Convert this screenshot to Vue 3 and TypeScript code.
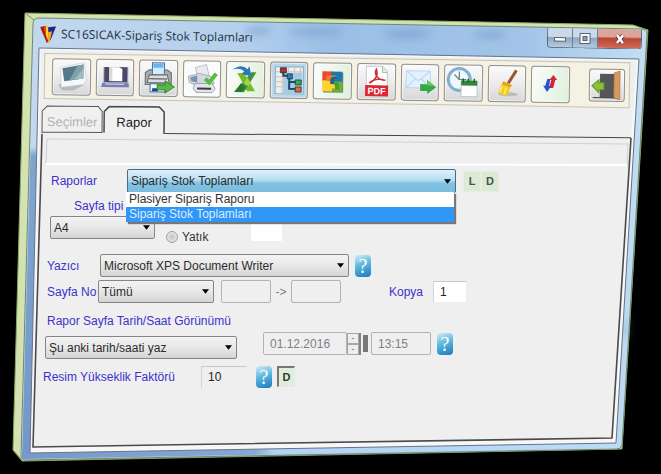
<script setup lang="ts">
import { ref } from 'vue'

const reports = ['Plasiyer Sipariş Raporu', 'Sipariş Stok Toplamları']
const report = ref('Sipariş Stok Toplamları')
const listOpen = ref(true)
const tab = ref('Rapor')
const paper = ref('A4')
const printer = ref('Microsoft XPS Document Writer')
const pages = ref('Tümü')
const stamp = ref('Şu anki tarih/saati yaz')
const copies = ref('1')
const factor = ref('10')
const date = ref('01.12.2016')
const time = ref('13:15')

function choose(name: string) {
  report.value = name
  listOpen.value = false
}
</script>

<template>
  <main class="stage">
    <svg class="chassis" viewBox="0 0 661 474" preserveAspectRatio="none" aria-hidden="true">
      <defs>
        <linearGradient id="glass" x1="0" y1="0" x2="1" y2="0">
          <stop offset="0" stop-color="#c3d8ee" />
          <stop offset=".35" stop-color="#b4d0ed" />
          <stop offset=".5" stop-color="#9bbfe6" />
          <stop offset=".8" stop-color="#a3c4e8" />
          <stop offset="1" stop-color="#c4def2" />
        </linearGradient>
        <linearGradient id="leftGlass" x1="0" y1="0" x2="0" y2="1">
          <stop offset="0" stop-color="#c3d8ee" />
          <stop offset=".28" stop-color="#c3d8ee" />
          <stop offset=".3" stop-color="#7fa5cf" />
          <stop offset="1" stop-color="#7398c8" />
        </linearGradient>
        <linearGradient id="baseGlass" x1="0" y1="0" x2="1" y2="0">
          <stop offset="0" stop-color="#7799cb" />
          <stop offset=".39" stop-color="#87a8d6" />
          <stop offset=".42" stop-color="#b3d1f2" />
          <stop offset="1" stop-color="#bcdcf6" />
        </linearGradient>
        <filter id="haze"><feGaussianBlur stdDeviation="4" /></filter>
      </defs>
      <path d="M25 13L633 25L648 30L622 449L22 461L13 450Z" fill="#d3e2b0" stroke="#8aa860" />
      <path d="M25 13L34 20M13 450L22 460" stroke="#7c9458" />
      <path d="M39 18L641 29Q647 29 647 34L622 445Q621 449 617 449L25 460Q21 460 21 455L33 24Q33 18 39 18Z" fill="url(#glass)" stroke="#6b8a72" />
      <path d="M34 26L39 48L31 453L22 458Z" fill="url(#leftGlass)" />
      <path d="M22 453L616 443L620 448L23 459Z" fill="url(#baseGlass)" />
      <g filter="url(#haze)" fill="#6f97c8" opacity=".55">
        <ellipse cx="258" cy="31" rx="14" ry="4" /><ellipse cx="316" cy="32" rx="28" ry="4" />
        <ellipse cx="408" cy="34" rx="24" ry="5" /><ellipse cx="490" cy="35" rx="17" ry="4" />
        <ellipse cx="626" cy="328" rx="2" ry="12" />
      </g>
      <path d="M39 48L639 59L616 443L30 453Z" fill="#f7f7f8" stroke="#64748a" />
      <path d="M41 50L637 61L631 138L612 438L34 447Z" fill="#efefef" />
      <path d="M42 134L33 447L612 438L631 138" fill="none" stroke="#4b494c" stroke-width="1.6" />
      <path d="M47 139L628 144L627 166M47 139L46 164" fill="none" stroke="#d0d0d0" />
      <path d="M46 164L627 165" fill="none" stroke="#fff" stroke-width="2" />
    </svg>

    <div class="window">
      <header class="titlebar">
        <svg class="logo" viewBox="0 0 16 17" aria-hidden="true">
          <path d="M0 1L5 0L9 15L7 17Z" fill="#a31812" />
          <path d="M3 0H8L9 9L7 14Z" fill="#e8471c" />
          <path d="M6 0H9L10 8L9 16L6 9Z" fill="#ffd932" />
          <path d="M8 1L16 0L11 13L9 16Z" fill="#1b2787" />
          <path d="M8 6L12 5L10 15L8 17Z" fill="#f3a720" />
        </svg>
        <h1>SC16SICAK-Sipariş Stok Toplamları</h1>
        <div class="winbtns">
          <button type="button" aria-label="Simge durumuna küçült"><svg viewBox="0 0 14 12"><rect x="1.500" y="5.500" width="11" height="3.500" fill="#fff" stroke="#59636f" /></svg></button>
          <button type="button" aria-label="Ekranı kapla"><svg viewBox="0 0 14 12"><path d="M2 1H12V11H2Z" fill="#f6f8fa" stroke="#59636f" /><path d="M5 4H9V8H5Z" fill="#8ea2bc" stroke="#59636f" /></svg></button>
          <button type="button" class="close" aria-label="Kapat"><svg viewBox="0 0 14 12"><path d="M4 2L10 10M10 2L4 10" stroke="#643234" stroke-width="4" /><path d="M4 2L10 10M10 2L4 10" stroke="#fff" stroke-width="2.500" /></svg></button>
        </div>
      </header>

      <nav class="toolbar" aria-label="Araçlar">
        <div class="tools">
          <button type="button" class="tool" aria-label="Ekran">
            <svg viewBox="0 0 36 32"><path d="M5 25L9 22L30 23V25L20 30H9Z" fill="#b8bbbd" /><path d="M7 7L31 2L33 20L30 24L8 27Z" fill="#f6f8f9" stroke="#c5cacc" stroke-width=".6" /><path d="M9 8L30 4L30 18L11 21Z" fill="#54798b" /><path d="M16 20L24 5L30 4V18Z" fill="#82a1ad" /><path d="M21 19L30 8V18Z" fill="#a3bac1" /></svg>
          </button>
          <button type="button" class="tool" aria-label="Önizleme">
            <svg viewBox="0 0 36 32"><path d="M6 6H31V20L32 26H4L6 20Z" fill="#aaaecb" /><path d="M7 6H30V21H7Z" fill="#4a4967" /><path d="M12 6H22L25 8V20H12Z" fill="#fff" /><path d="M12 6H15V20H12Z" fill="#d8dbd8" /><path d="M5 22H31L32 26H4Z" fill="#787fae" /><path d="M8 23H27" stroke="#dbe0f1" /></svg>
          </button>
          <button type="button" class="tool" aria-label="Yazdır">
            <svg viewBox="0 0 36 32"><path d="M9 8H27L31 11V23H5V11Z" fill="#a8acb0" stroke="#5f6770" /><path d="M12 1H24V13H12Z" fill="#d5ecff" stroke="#416fa5" /><path d="M13 2H23V6H13Z" fill="#68b4ee" /><path d="M9 13H27L29 21H7Z" fill="#dedddd" stroke="#666" /><path d="M9 17H27" stroke="#444" /><path d="M10 22H25V30H10Z" fill="#f5faff" stroke="#46739b" /><path d="M12 28H18" stroke="#164b8b" stroke-width="3" /><path d="M17 23H25V19L34 25L25 31V28H17Z" fill="#59b941" stroke="#328a2b" /></svg>
          </button>
          <button type="button" class="tool white" aria-label="Yazıcı seç">
            <svg viewBox="0 0 36 32"><path d="M11 5L22 2L25 14L14 18Z" fill="#e8eaed" stroke="#bbc0c8" /><path d="M4 14L15 11L27 14L30 21L16 25L5 20Z" fill="#d5d8e1" stroke="#9298a5" stroke-width=".7" /><path d="M6 15L13 13V20L7 19Z" fill="#7f8fae" /><path d="M11 21H28L31 26L28 30H12L9 26Z" fill="#e3e5ea" stroke="#858993" stroke-width=".7" /><path d="M13 26H27" stroke="#38383d" stroke-width="2" /><path d="M21 16L25 20L32 11" fill="none" stroke="#56bd3d" stroke-width="4" /></svg>
          </button>
          <button type="button" class="tool mint" aria-label="Excel">
            <svg viewBox="0 0 36 32"><path d="M10 10H17L28 28H20Z" fill="#78b82b" /><path d="M24 9H29L17 29H8Z" fill="#3e953b" /><path d="M16 20L20 14L24 20L21 23Z" fill="#a2d445" /><path d="M7 29L14 20L18 24L15 29Z" fill="#25782e" /><path d="M5 7Q14 0 20 6L22 3L24 13L14 11L17 8Q11 4 5 7Z" fill="#2b78bc" /></svg>
          </button>
          <button type="button" class="tool sky" aria-label="Ağaç">
            <svg viewBox="0 0 36 32"><path d="M4 3H32V30H4Z" fill="#e4f1fa" stroke="#85aac2" /><path d="M4 8H32M4 13H12M4 18H12M4 23H12M11 3V30M17 3V9M23 3V9M29 3V9" stroke="#e1bc94" /><path d="M12 9H31V30H12Z" fill="#a4cce7" /><path d="M12 8V12H18V25H25M18 18H25" fill="none" stroke="#1b4a66" stroke-width="2" /><g stroke="#222" stroke-width=".7"><path d="M9 4H15V9H9Z" fill="#b42c32" /><path d="M16 10H21V15H16Z" fill="#287fbe" /><path d="M24 16H30V21H24Z" fill="#39aa59" /><path d="M24 23H30V28H24Z" fill="#e46b39" /></g></svg>
          </button>
          <button type="button" class="tool mint" aria-label="Yapboz">
            <svg viewBox="0 0 36 32"><path d="M9 8H29V28H9Z" fill="#444" opacity=".65" /><path d="M8 7H18V17H8Z" fill="#e84c2d" /><path d="M17 7H28V17H17Z" fill="#1978af" /><path d="M8 16H18V27H8Z" fill="#ffd42a" /><path d="M18 17H28V27H18Z" fill="#6bb52d" /><path d="M12 16V11H22V15H17V17Z" fill="#f77a28" /><path d="M17 13Q23 10 23 15H20V20H16V15Z" fill="#17668f" /><path d="M11 17Q16 16 16 20Q21 18 21 24H12Z" fill="#ffd52b" /><path d="M20 18Q25 16 25 21V25H21V21Z" fill="#4f9a2b" /></svg>
          </button>
          <button type="button" class="tool" aria-label="PDF">
            <svg viewBox="0 0 36 32"><path d="M8 1H24L29 6V22H8Z" fill="#fff" stroke="#c7c9ca" /><path d="M24 1V7H29" fill="#e2eee5" stroke="#a9bbaf" /><path d="M11 18C17 15 20 10 18 4C15 9 20 15 27 15C20 13 14 15 11 18" fill="none" stroke="#d22d36" stroke-width="1.500" /><path d="M7 20H30V31H7Z" fill="#dc2835" /><text x="18.500" y="29" class="pdf">PDF</text></svg>
          </button>
          <button type="button" class="tool" aria-label="E-posta">
            <svg viewBox="0 0 36 32"><path d="M4 5H28V22H4Z" fill="#e2f1fd" stroke="#a9cbea" stroke-width=".7" /><path d="M4 5L16 15L28 5M4 22L13 13M28 22L19 13" fill="none" stroke="#b8d5ed" /><path d="M18 18H25V14L34 21L25 28V25H18Z" fill="#36a846" /><path d="M18 18H25V14L32 20Z" fill="#67c85f" /></svg>
          </button>
          <button type="button" class="tool" aria-label="Zamanla">
            <svg viewBox="0 0 36 32"><circle cx="14" cy="13" r="11" fill="#eff8fb" stroke="#83b0d0" stroke-width="3" /><path d="M14 5V13H21M14 13L9 8" fill="none" stroke="#6c7a84" stroke-width="1.200" /><path d="M16 15H32V30H16Z" fill="#fff" stroke="#bfcac1" /><path d="M16 14H32V19H16Z" fill="#31883a" /><path d="M18 12V16M23 12V16M29 12V16" stroke="#255a2a" stroke-width="1.500" /></svg>
          </button>
          <button type="button" class="tool" aria-label="Temizle">
            <svg viewBox="0 0 36 32"><ellipse cx="19" cy="27" rx="10" ry="2" fill="#bbb" /><path d="M27 3L19 16" stroke="#9b582e" stroke-width="3" /><path d="M13 15L22 18L18 29L9 26Z" fill="#f2cb29" /><path d="M14 14L23 18L21 20L13 17Z" fill="#e4a21d" /><path d="M13 19L11 25M17 20L15 27" stroke="#fff077" stroke-width="1.500" /></svg>
          </button>
          <button type="button" class="tool mint" aria-label="Yenile">
            <svg viewBox="0 0 36 32"><path d="M21 7L25 12H23L21 20H17L19 12H17Z" fill="#dc2330" /><path d="M15 24L11 18H13L15 11H18L17 18H19Z" fill="#2653cf" /></svg>
          </button>
        </div>
        <button type="button" class="tool exit" aria-label="Çıkış">
          <svg viewBox="0 0 34 30"><path d="M10 3H26V27H10Z" fill="#55565a" /><path d="M24 2L30 0V29L24 27Z" fill="#d49a5f" stroke="#a86d3b" stroke-width=".6" /><path d="M3 27H25" stroke="#444" /><path d="M2 15L9 9V12H14V19H9V22Z" fill="#8bc334" stroke="#5c942a" /></svg>
        </button>
      </nav>

      <div class="tabs" role="tablist">
        <button type="button" role="tab" class="tab off" :aria-selected="tab === 'Seçimler'" disabled>
          <svg viewBox="0 0 62 28" preserveAspectRatio="none" aria-hidden="true"><path d="M1 28V6L6 1H57L61 6V27H1" fill="#f0f0f0" stroke="#55555a" /></svg>
          <span>Seçimler</span>
        </button>
        <button type="button" role="tab" class="tab on" :aria-selected="tab === 'Rapor'" @click="tab = 'Rapor'">
          <svg viewBox="0 0 62 28" preserveAspectRatio="none" aria-hidden="true"><path d="M1 27V6L6 1H56L61 6V28" fill="#f0f0f0" stroke="#444448" stroke-width="1.500" /></svg>
          <span>Rapor</span>
        </button>
        <span class="rule"></span>
      </div>

      <form class="form" @submit.prevent>
        <div class="row report">
          <label for="report">Raporlar</label>
          <div class="combo">
            <span class="select blue">
              <select id="report" v-model="report" @mousedown.prevent="listOpen = !listOpen">
                <option v-for="r in reports" :key="r">{{ r }}</option>
              </select>
              <svg viewBox="0 0 8 5" aria-hidden="true"><path d="M0 0H8L4 5Z" /></svg>
            </span>
            <ul v-if="listOpen" class="list" role="listbox" aria-label="Raporlar">
              <li v-for="r in reports" :key="r" role="option" :aria-selected="r === report" :class="{ picked: r === report }" @click="choose(r)">{{ r }}</li>
            </ul>
          </div>
          <div class="letters"><button type="button">L</button><button type="button">D</button></div>
        </div>

        <div class="row kind"><label for="paper">Sayfa tipi</label></div>
        <div class="row paper">
          <span class="select"><select id="paper" v-model="paper"><option>A4</option></select><svg viewBox="0 0 8 5" aria-hidden="true"><path d="M0 0H8L4 5Z" /></svg></span>
          <label class="radio"><input type="radio" name="orientation" value="yatik" />Yatık</label>
          <input class="blank" type="text" aria-label="Sayfa ölçüsü" />
        </div>

        <div class="row printer">
          <label for="printer">Yazıcı</label>
          <span class="select"><select id="printer" v-model="printer"><option>Microsoft XPS Document Writer</option></select><svg viewBox="0 0 8 5" aria-hidden="true"><path d="M0 0H8L4 5Z" /></svg></span>
          <button type="button" class="help" aria-label="Yazıcı yardımı">?</button>
        </div>

        <div class="row pages">
          <label for="pages">Sayfa No</label>
          <span class="select"><select id="pages" v-model="pages"><option>Tümü</option></select><svg viewBox="0 0 8 5" aria-hidden="true"><path d="M0 0H8L4 5Z" /></svg></span>
          <input class="box" type="text" aria-label="İlk sayfa" disabled />
          <span class="to">-&gt;</span>
          <input class="box" type="text" aria-label="Son sayfa" disabled />
          <label for="copies" class="copylabel">Kopya</label>
          <input id="copies" v-model="copies" class="copies" type="text" />
        </div>

        <div class="row heading"><label for="stamp">Rapor Sayfa Tarih/Saat Görünümü</label></div>
        <div class="row stamp">
          <span class="select"><select id="stamp" v-model="stamp"><option>Şu anki tarih/saati yaz</option></select><svg viewBox="0 0 8 5" aria-hidden="true"><path d="M0 0H8L4 5Z" /></svg></span>
          <div class="when">
            <input v-model="date" class="box date" type="text" aria-label="Tarih" disabled />
            <span class="spin"><button type="button" aria-label="Artır" disabled>-</button><button type="button" aria-label="Azalt" disabled>-</button></span>
            <span class="grip"></span>
            <input v-model="time" class="box time" type="text" aria-label="Saat" disabled />
            <button type="button" class="help" aria-label="Tarih yardımı">?</button>
          </div>
        </div>

        <div class="row factor">
          <label for="factor">Resim Yükseklik Faktörü</label>
          <input id="factor" v-model="factor" class="sunk" type="text" />
          <button type="button" class="help" aria-label="Resim yardımı">?</button>
          <button type="button" class="pressed">D</button>
        </div>
      </form>
    </div>
  </main>
</template>

<style>
body {
  margin: 0;
  background: #000;
}
</style>

<style scoped>
* {
  box-sizing: border-box;
}
.stage {
  display: grid;
  min-height: 100vh;
  background: #000;
  font: 12px/16px "Liberation Sans", Arial, sans-serif;
  color: #333;
}
.chassis {
  grid-area: 1 / 1;
  width: 100%;
  height: 100%;
}
.window {
  grid-area: 1 / 1;
  z-index: 1;
  min-width: 0;
  padding: 19px 19px 24px 40px;
}
button, input, select {
  margin: 0;
  font: inherit;
  color: inherit;
}
button {
  padding: 0;
}
.titlebar {
  display: flex;
  align-items: center;
  height: 30px;
  transform: rotate(1deg);
  transform-origin: left center;
}
.logo {
  width: 16px;
  height: 17px;
}
h1 {
  flex: 1;
  margin: 0 0 0 5px;
  font: 12px/18px "Open Sans", "Noto Sans", sans-serif;
  color: #26323f;
}
.winbtns {
  display: flex;
  align-self: flex-start;
  width: 95px;
  height: 20px;
  border: 1px solid #56687e;
  border-top: 0;
  border-radius: 0 0 4px 4px;
  overflow: hidden;
}
.winbtns button {
  flex: 1;
  display: grid;
  place-items: center;
  border: 0;
  border-right: 1px solid #66788e;
  background: linear-gradient(#c9d9ea 0 45%, #90a6bf 50%, #b7cbdf);
}
.winbtns .close {
  flex: 0 0 43px;
  border-right: 0;
  background: linear-gradient(#dca49a 0 40%, #b94634 50%, #cf6a54);
}
.winbtns svg {
  width: 14px;
  height: 12px;
}
.toolbar {
  display: flex;
  align-items: center;
  gap: 19px;
  height: 46px;
  margin: 4px 12px 0 4px;
  padding: 0 4px 0 7px;
  border: 1px solid #c5c3b9;
  background: #f5f1e3;
  transform: rotate(0.9deg);
  transform-origin: left center;
}
.tools {
  display: flex;
  flex: 1;
  gap: 5px;
  min-width: 0;
}
.tool {
  display: grid;
  place-items: center;
  flex: 1 1 0;
  min-width: 0;
  height: 37px;
  border: 1px solid #8e8e90;
  border-radius: 3px;
  background: linear-gradient(#fafafa, #ececec 50%, #d7d7d9);
  box-shadow: inset 0 0 0 1px #ffffff99;
}
.tool svg {
  width: 100%;
  height: 32px;
}
.white {
  background: #fbfbfb;
}
.mint {
  background: linear-gradient(100deg, #fafcfa, #dff0dc);
}
.sky {
  background: #b9d7e7;
}
.exit {
  flex: 0 0 36px;
  height: 33px;
}
.pdf {
  font: bold 9px "Liberation Sans", Arial, sans-serif;
  fill: #fff;
  text-anchor: middle;
}
.tabs {
  display: flex;
  height: 28px;
  margin: 6px 11px 0 1px;
  transform: rotate(0.5deg);
  transform-origin: left bottom;
}
.tab {
  display: grid;
  width: 62px;
  border: 0;
  background: none;
  font-size: 13px;
}
.tab svg, .tab span {
  grid-area: 1 / 1;
}
.tab svg {
  width: 100%;
  height: 28px;
}
.tab span {
  align-self: center;
  z-index: 1;
  padding-top: 6px;
}
.off {
  color: #b3b3b5;
}
.on {
  color: #222;
}
.rule {
  flex: 1;
  border-bottom: 1px solid #444448;
}
.form {
  padding: 36px 0 0 3px;
}
.row {
  display: flex;
  align-items: center;
  min-height: 23px;
}
label, .row {
  color: #3c32cc;
}
.select {
  display: grid;
  align-items: center;
  height: 23px;
}
.select select, .select svg {
  grid-area: 1 / 1;
}
.select select {
  width: 100%;
  height: 100%;
  padding: 0 20px 0 3px;
  appearance: none;
  border: 1px solid #858587;
  border-radius: 2px;
  background: linear-gradient(#f3f3f3, #e8e8e8 50%, #d4d4d4);
  color: #2c2c2c;
}
.select svg {
  justify-self: end;
  width: 7px;
  height: 5px;
  margin-right: 5px;
  pointer-events: none;
}
.select.blue {
  height: 24px;
}
.blue select {
  border-color: #426e8c;
  background: linear-gradient(#e0f1fa, #b6dff2 45%, #82c2e2 60%, #7bbbdc);
}
.report {
  padding-left: 8px;
}
.report > label {
  width: 76px;
}
.combo {
  position: relative;
  width: 329px;
}
.list {
  position: absolute;
  z-index: 2;
  top: 23px;
  left: -1px;
  right: 2px;
  margin: 0;
  padding: 0;
  list-style: none;
  background: #fff;
  color: #333;
  box-shadow: 2px 2px 1px #77777a;
}
.list li {
  height: 15px;
  padding-left: 3px;
  line-height: 15px;
}
.list .picked {
  background: #3096f8;
  color: #d9ecff;
}
.letters {
  display: flex;
  margin-left: 6px;
  padding: 1px;
}
.letters button {
  width: 18px;
  height: 21px;
  border: 1px solid #e8eeda;
  background: #dbe9d6;
  color: #485348;
  font-size: 11px;
  font-weight: bold;
}
.kind {
  min-height: 16px;
  margin-top: 5px;
  padding-left: 31px;
}
.paper {
  align-items: flex-start;
  margin-top: 2px;
  padding-left: 7px;
}
.paper .select {
  width: 105px;
}
.radio {
  display: flex;
  align-items: center;
  gap: 4px;
  width: 85px;
  margin: 13px 0 0 11px;
  color: #333;
}
.radio input {
  width: 12px;
  height: 12px;
  appearance: none;
  border: 1px solid #9e9ea0;
  border-radius: 50%;
  background: radial-gradient(#c4c4c4, #f4f4f4);
}
.blank {
  width: 31px;
  height: 17px;
  margin-top: 8px;
  border: 0;
  background: #fff;
}
.printer {
  margin-top: 9px;
  padding-left: 4px;
}
.printer label {
  width: 53px;
}
.printer .select {
  width: 249px;
}
.help {
  width: 16px;
  height: 22px;
  margin-left: 6px;
  border: 0;
  border-radius: 4px;
  background: linear-gradient(160deg, #d3ecf4, #5db8df 45%, #1b78ba);
  color: #fff;
  font: 20px/22px "Liberation Serif", serif;
}
.pages {
  margin-top: 3px;
  padding-left: 4px;
}
.pages label:first-child {
  width: 51px;
}
.pages .select {
  width: 116px;
  margin-right: 7px;
}
.box {
  width: 50px;
  height: 23px;
  padding: 0 6px;
  border: 1px solid #b2b2b4;
  border-radius: 2px;
  background: #efefef;
  color: #808082;
}
.to {
  width: 20px;
  color: #808082;
  text-align: center;
}
.pages .copylabel {
  width: 44px;
  margin-left: 48px;
}
.copies, .sunk {
  width: 34px;
  height: 22px;
  padding: 0 6px;
  border: 1px solid #d9d9da;
  border-color: #c8c8ca #eee #eee #d3d3d5;
  background: #fff;
  color: #222;
}
.heading {
  min-height: 16px;
  margin-top: 10px;
  padding-left: 4px;
}
.stamp {
  align-items: flex-end;
  min-height: 27px;
  margin-top: 3px;
  padding-left: 2px;
}
.stamp .select {
  width: 192px;
}
.when {
  display: flex;
  align-items: center;
  align-self: flex-start;
  margin-left: 26px;
}
.date {
  width: 84px;
}
.time {
  width: 60px;
}
.spin {
  display: grid;
  width: 14px;
  height: 22px;
  border-right: 2px solid #858587;
}
.spin button {
  border: 1px solid #a5a5a7;
  background: #eee;
  font-size: 10px;
  line-height: 8px;
  color: #808082;
}
.grip {
  width: 5px;
  height: 17px;
  margin: 0 3px 0 2px;
  background: #77777a;
}
.factor {
  margin-top: 6px;
}
.factor label {
  width: 158px;
}
.sunk {
  width: 46px;
  margin-right: 3px;
  background: #efefef;
}
.pressed {
  width: 18px;
  height: 21px;
  margin-left: 5px;
  border: 1px solid #e4ecd9;
  border-top: 2px solid #77777a;
  border-left: 2px solid #77777a;
  background: #dfeeda;
  color: #333;
  font-size: 11px;
  font-weight: bold;
}
</style>
